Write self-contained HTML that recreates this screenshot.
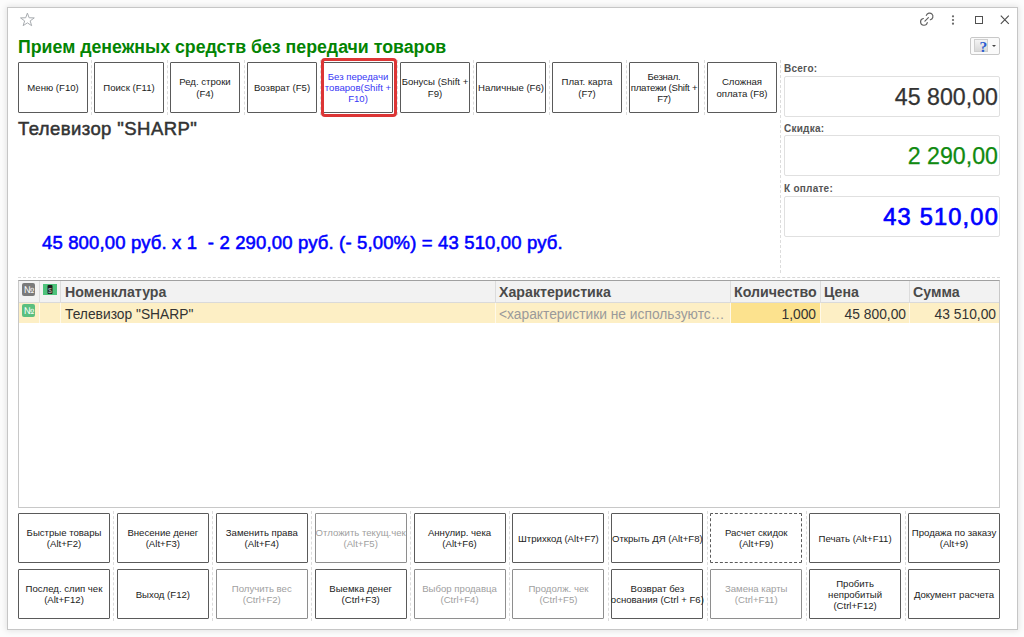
<!DOCTYPE html>
<html><head><meta charset="utf-8">
<style>
*{box-sizing:border-box;margin:0;padding:0}
html,body{width:1024px;height:637px;overflow:hidden;background:#fcfcfc;font-family:"Liberation Sans",sans-serif;color:#333}
.abs{position:absolute}
#win{position:absolute;left:7px;top:7px;width:1011px;height:623px;border:1px solid #c6c6c6;background:#fff;box-shadow:0 0 6px 1px rgba(0,0,0,0.10)}
.title{position:absolute;left:18.4px;top:35.6px;font-size:19.2px;font-weight:bold;color:#038403;white-space:nowrap;transform:scaleX(0.925);transform-origin:0 0}
.tb{position:absolute;top:62px;width:70px;height:51px;border:1px solid #5a5a5a;border-radius:1px;font-size:9.6px;letter-spacing:0px;line-height:11.2px;padding-top:0px;color:#222;display:flex;align-items:center;justify-content:center;text-align:center;background:#fff;white-space:nowrap}
.sep{position:absolute;width:0;border-left:1px dashed #dcdcdc}
.bb{position:absolute;width:92px;height:50px;border:1px solid #5a5a5a;border-radius:1px;font-size:9.6px;letter-spacing:0px;line-height:11px;padding-top:0px;color:#222;display:flex;align-items:center;justify-content:center;text-align:center;background:#fff;white-space:nowrap}
.dis{color:#a0a0a0;border-color:#8e8e8e}
.lbl{position:absolute;left:784px;font-size:10px;letter-spacing:0.25px;font-weight:bold;color:#555;line-height:12px}
.fld{position:absolute;left:784px;width:216px;height:41px;border:1px solid #e0e0e0;border-radius:2px;text-align:right;padding-right:1px;padding-top:1px;font-size:23.2px;line-height:38px;white-space:nowrap;-webkit-text-stroke:0.25px currentColor}
.vl{position:absolute;width:1px;background:#dcdcdc}
.ic{position:absolute;width:13px;height:13px;border-radius:2px;color:#fff;font-size:10px;line-height:13px;text-align:center;letter-spacing:-1px}
.th{position:absolute;top:282px;height:20px;line-height:20px;font-size:14.2px;font-weight:bold;color:#4a4a4a;white-space:nowrap}
.td{position:absolute;top:305px;height:20px;line-height:20px;font-size:13.8px;color:#333;white-space:nowrap}
.r{text-align:right}
.foc{border-style:dashed}
</style></head><body>
<div id="win"></div>

<!-- star -->
<svg class="abs" style="left:15px;top:8px" width="25" height="22" viewBox="0 0 25 22"><path d="M12.40 5.10 L14.11 9.78 L19.27 9.90 L15.17 12.92 L16.65 17.67 L12.40 14.85 L8.15 17.67 L9.63 12.92 L5.53 9.90 L10.69 9.78 Z" fill="none" stroke="#a8acb0" stroke-width="1" stroke-linejoin="round"/></svg>

<!-- window icons -->
<svg class="abs" style="left:915px;top:8px" width="25" height="22" viewBox="0 0 25 22"><g fill="none" stroke="#606060" stroke-width="1.15" stroke-linecap="round"><path d="M11.3 7.4 A3.4 3.4 0 1 1 15.3 11.8"/><path d="M8.4 10.5 A3.4 3.4 0 1 0 12.3 14.5"/><path d="M9.9 13.1 L13.4 9.7"/></g></svg>
<svg class="abs" style="left:950px;top:14px" width="6" height="12" viewBox="0 0 6 12"><circle cx="3" cy="2.3" r="1.1" fill="#666"/><circle cx="3" cy="6" r="1.1" fill="#666"/><circle cx="3" cy="9.7" r="1.1" fill="#666"/></svg>
<div class="abs" style="left:975.3px;top:15.8px;width:8px;height:8px;border:1px solid #505050"></div>
<svg class="abs" style="left:999px;top:14px" width="11" height="11" viewBox="0 0 11 11"><path d="M1.8 1.6 L9.8 9.8 M9.8 1.6 L1.8 9.8" stroke="#4a4a4a" stroke-width="1.1"/></svg>

<div class="title">Прием денежных средств без передачи товаров</div>

<!-- help button -->
<div class="abs" style="left:970px;top:37px;width:30px;height:18px;border:1px solid #c8c8c8;border-radius:2px;background:#fafafa"></div>
<div class="abs" style="left:974px;top:39px;width:14px;height:13px;background:linear-gradient(#f4f4f4,#d8d8d8);border:1px solid #cfcfcf"></div>
<div class="abs" style="left:979.5px;top:38px;font-family:'Liberation Serif',serif;font-weight:bold;font-size:15.5px;line-height:17px;color:#2a5cd0">?</div>
<div class="abs" style="left:992px;top:45px;width:0;height:0;border-left:2.5px solid transparent;border-right:2.5px solid transparent;border-top:2.5px solid #444"></div>

<!-- top buttons -->
<div class="sep" style="left:90.5px;top:60px;height:55px"></div>
<div class="sep" style="left:166.5px;top:60px;height:55px"></div>
<div class="sep" style="left:243.5px;top:60px;height:55px"></div>
<div class="sep" style="left:319.5px;top:60px;height:55px"></div>
<div class="sep" style="left:396.5px;top:60px;height:55px"></div>
<div class="sep" style="left:472.5px;top:60px;height:55px"></div>
<div class="sep" style="left:548.5px;top:60px;height:55px"></div>
<div class="sep" style="left:625.5px;top:60px;height:55px"></div>
<div class="sep" style="left:703.5px;top:60px;height:55px"></div>
<div class="tb" style="left:18px">Меню (F10)</div>
<div class="tb" style="left:94px">Поиск (F11)</div>
<div class="tb" style="left:170px">Ред. строки<br>(F4)</div>
<div class="tb" style="left:247px">Возврат (F5)</div>
<div class="tb" style="left:323px;color:#3838f5">Без передачи<br>товаров(Shift +<br>F10)</div>
<div class="tb" style="left:400px">Бонусы (Shift +<br>F9)</div>
<div class="tb" style="left:476px">Наличные (F6)</div>
<div class="tb" style="left:552px">Плат. карта<br>(F7)</div>
<div class="tb" style="left:629px;letter-spacing:-0.25px">Безнал.<br>платежи (Shift +<br>F7)</div>
<div class="tb" style="left:707px">Сложная<br>оплата (F8)</div>
<!-- red highlight -->
<div class="abs" style="left:320.5px;top:58px;width:76px;height:59px;border:3px solid #dc3535;border-radius:4px"></div>

<!-- right panel -->
<div class="sep" style="left:780px;top:60px;height:213px"></div>
<div class="lbl" style="top:63px">Всего:</div>
<div class="fld" style="top:76px;color:#333">45 800,00</div>
<div class="lbl" style="top:123px">Скидка:</div>
<div class="fld" style="top:135px;color:#108a10">2 290,00</div>
<div class="lbl" style="top:183px">К оплате:</div>
<div class="fld" style="top:196px;color:#0000ff;font-size:23.6px;letter-spacing:1.2px;padding-right:0px;margin-right:-1px;-webkit-text-stroke:0.7px #0000ff">43 510,00</div>

<div class="abs" style="left:18px;top:118px;font-size:18.5px;letter-spacing:0.42px;-webkit-text-stroke:0.5px #333;color:#333;white-space:nowrap">Телевизор "SHARP"</div>
<div class="abs" style="left:42px;top:232px;font-size:18.5px;-webkit-text-stroke:0.55px #0000ff;letter-spacing:0.15px;color:#0000ff;white-space:pre">45 800,00 руб. x 1  - 2 290,00 руб. (- 5,00%) = 43 510,00 руб.</div>

<!-- table -->
<div class="sep" style="left:18px;top:277px;width:982px;height:0;border-left:none;border-top:1px dashed #d8d8d8"></div>
<div id="tbl" class="abs" style="left:18px;top:280px;width:982px;height:228px;border:1px solid #c8c8c8;border-top-color:#a0a0a0;background:#fff"></div>
<div class="abs" style="left:19px;top:281px;width:980px;height:22px;background:#f2f2f2;border-bottom:1px solid #dadada"></div>
<div class="abs" style="left:19px;top:303px;width:980px;height:20px;background:#fdefc5"></div>
<div class="abs" style="left:731px;top:303px;width:89px;height:20px;background:#fce28e"></div>
<div class="vl" style="left:39px;top:281px;height:22px"></div><div class="vl" style="left:39px;top:303px;height:20px;background:#fff9e8"></div>
<div class="vl" style="left:60px;top:281px;height:22px"></div><div class="vl" style="left:60px;top:303px;height:20px;background:#fff9e8"></div>
<div class="vl" style="left:495px;top:281px;height:22px"></div><div class="vl" style="left:495px;top:303px;height:20px;background:#fff9e8"></div>
<div class="vl" style="left:730px;top:281px;height:22px"></div><div class="vl" style="left:730px;top:303px;height:20px;background:#fff9e8"></div>
<div class="vl" style="left:820px;top:281px;height:22px"></div><div class="vl" style="left:820px;top:303px;height:20px;background:#fff9e8"></div>
<div class="vl" style="left:909px;top:281px;height:22px"></div><div class="vl" style="left:909px;top:303px;height:20px;background:#fff9e8"></div>
<div class="ic" style="left:22px;top:283px;background:#7a7a7a">№</div>
<svg class="abs" style="left:43px;top:284px" width="14" height="11" viewBox="0 0 14 11"><rect x="0" y="0" width="14" height="11" fill="#4cc27a"/><rect x="4.5" y="1" width="5" height="9" rx="1" fill="#1b1b1b"/><text x="7" y="8.5" font-size="7" text-anchor="middle" fill="#bdbdbd" font-family="Liberation Sans">$</text></svg>
<div class="ic" style="left:22px;top:304px;background:#5bbf7f">№</div>
<div class="th" style="left:65px">Номенклатура</div>
<div class="th" style="left:499px">Характеристика</div>
<div class="th" style="left:734px">Количество</div>
<div class="th" style="left:824px">Цена</div>
<div class="th" style="left:913px">Сумма</div>
<div class="td" style="left:65px">Телевизор "SHARP"</div>
<div class="td" style="left:499px;width:226px;overflow:hidden;text-overflow:ellipsis;color:#9a9a9a">&lt;характеристики не используются&gt;</div>
<div class="td r" style="left:731px;width:85px">1,000</div>
<div class="td r" style="left:821px;width:85px">45 800,00</div>
<div class="td r" style="left:910px;width:86px">43 510,00</div>

<!-- bottom buttons -->
<div class="sep" style="left:113.39px;top:511px;height:110px"></div>
<div class="sep" style="left:212.28px;top:511px;height:110px"></div>
<div class="sep" style="left:311.17px;top:511px;height:110px"></div>
<div class="sep" style="left:410.06px;top:511px;height:110px"></div>
<div class="sep" style="left:508.94px;top:511px;height:110px"></div>
<div class="sep" style="left:607.83px;top:511px;height:110px"></div>
<div class="sep" style="left:706.72px;top:511px;height:110px"></div>
<div class="sep" style="left:805.61px;top:511px;height:110px"></div>
<div class="sep" style="left:904.50px;top:511px;height:110px"></div>
<div class="bb " style="left:18.00px;top:513px">Быстрые товары<br>(Alt+F2)</div>
<div class="bb " style="left:116.89px;top:513px">Внесение денег<br>(Alt+F3)</div>
<div class="bb " style="left:215.78px;top:513px">Заменить права<br>(Alt+F4)</div>
<div class="bb dis" style="left:314.67px;top:513px">Отложить текущ.чек<br>(Alt+F5)</div>
<div class="bb " style="left:413.56px;top:513px">Аннулир. чека<br>(Alt+F6)</div>
<div class="bb " style="left:512.44px;top:513px">Штрихкод (Alt+F7)</div>
<div class="bb " style="left:611.33px;top:513px">Открыть ДЯ (Alt+F8)</div>
<div class="bb foc" style="left:710.22px;top:513px">Расчет скидок<br>(Alt+F9)</div>
<div class="bb " style="left:809.11px;top:513px">Печать (Alt+F11)</div>
<div class="bb " style="left:908.00px;top:513px">Продажа по заказу<br>(Alt+9)</div>
<div class="bb " style="left:18.00px;top:569px">Послед. слип чек<br>(Alt+F12)</div>
<div class="bb " style="left:116.89px;top:569px">Выход (F12)</div>
<div class="bb dis" style="left:215.78px;top:569px">Получить вес<br>(Ctrl+F2)</div>
<div class="bb " style="left:314.67px;top:569px">Выемка денег<br>(Ctrl+F3)</div>
<div class="bb dis" style="left:413.56px;top:569px">Выбор продавца<br>(Ctrl+F4)</div>
<div class="bb dis" style="left:512.44px;top:569px">Продолж. чек<br>(Ctrl+F5)</div>
<div class="bb " style="left:611.33px;top:569px">Возврат без<br>основания (Ctrl + F6)</div>
<div class="bb dis" style="left:710.22px;top:569px">Замена карты<br>(Ctrl+F11)</div>
<div class="bb " style="left:809.11px;top:569px">Пробить<br>непробитый<br>(Ctrl+F12)</div>
<div class="bb " style="left:908.00px;top:569px">Документ расчета</div>
</body></html>
